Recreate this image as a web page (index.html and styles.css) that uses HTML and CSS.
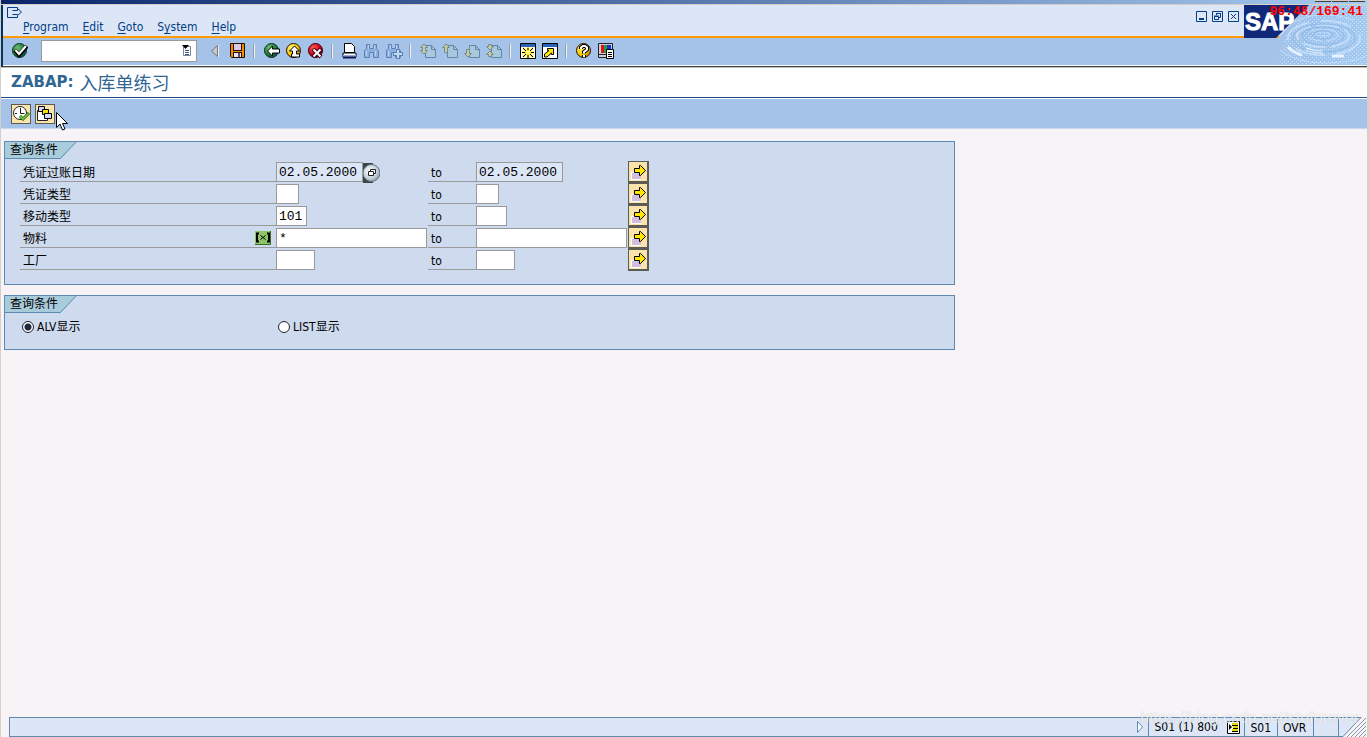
FILE: index.html
```html
<!DOCTYPE html>
<html lang="zh-CN">
<head>
<meta charset="utf-8">
<title>入库单练习</title>
<link rel="stylesheet" href="styles.css">
</head>
<body>
<svg class="defs" width="0" height="0" aria-hidden="true">
  <defs>
    <radialGradient id="green" cx=".35" cy=".3" r=".8"><stop offset="0" stop-color="#6cc070"/><stop offset=".6" stop-color="#1c7a34"/><stop offset="1" stop-color="#0c4a4c"/></radialGradient>
    <radialGradient id="yellow" cx=".35" cy=".3" r=".8"><stop offset="0" stop-color="#fff27a"/><stop offset=".6" stop-color="#f8c800"/><stop offset="1" stop-color="#c07800"/></radialGradient>
    <radialGradient id="red" cx=".35" cy=".3" r=".8"><stop offset="0" stop-color="#ff5a50"/><stop offset=".6" stop-color="#d80018"/><stop offset="1" stop-color="#800020"/></radialGradient>
    <radialGradient id="silver" cx=".4" cy=".4" r=".7"><stop offset="0" stop-color="#ffffff"/><stop offset=".6" stop-color="#c4d0dc"/><stop offset="1" stop-color="#808890"/></radialGradient>
    <linearGradient id="water" x1="0" y1="0" x2="1" y2="0"><stop offset="0" stop-color="#a6c4e8"/><stop offset=".4" stop-color="#9cc4ee"/><stop offset="1" stop-color="#a4caf0"/></linearGradient>
    <pattern id="grain" width="4" height="4" patternUnits="userSpaceOnUse"><path d="M0 0h1v1h-1zM2 2h1v1h-1z" fill="#cfe2fa"/></pattern>
    <symbol id="page" viewBox="0 0 16 16"><path d="M5.500 2.500h6l4 4v8h-10zM11.500 2.500v4h4" fill="#a9c8dc" stroke="#5f86a4"/></symbol>
    <symbol id="glasses" viewBox="0 0 16 16"><path d="M2.500 1.500h3v4h4v-4h3v4l2 2v7h-5v-5h-4v5h-5v-7l2-2z" fill="#8eb0de" stroke="#5c82b4"/><path d="M4.500 2v4M10.500 2v4M2.500 8v5M11.500 8v5" stroke="#bad2f0"/></symbol>
    <symbol id="more" viewBox="0 0 18 18"><path d="M2 9h10v8H2z" fill="#fff"/><path d="M3 10h9v6H3z" fill="#d2bce0"/><path d="M5.500 5.500h5v-3l1 0 5 5-5 5h-1v-3h-5z" fill="#ffe600" stroke="#000"/></symbol>
  </defs>
</svg>
<div class="window">
  <div class="caption"><i></i><i></i><i></i></div>
  <header class="head">
    <div class="menu-area">
      <div class="menus">
        <svg class="sys-icon" width="16" height="12" viewBox="0 0 16 12"><path d="M10.500 2V.5H.5v10h10V9M5.500 3.500h5V1.500l4 3.500-4 3.500V7.500h-5" fill="none" stroke="#003f87"/></svg>
        <nav class="menu"><button><u>P</u>rogram</button><button><u>E</u>dit</button><button><u>G</u>oto</button><button>S<u>y</u>stem</button><button><u>H</u>elp</button></nav>
      </div>
      <div class="win-buttons">
        <button aria-label="Minimize"><svg width="11" height="11"><path d="M.5.5h10v10H.5z" fill="none" stroke="#003f87"/><path d="M3 7h5v2H3z" fill="#003f87"/></svg></button>
        <button aria-label="Restore"><svg width="11" height="11"><path d="M.5.5h10v10H.5zM4.500 4V2.500h4v4H7M2.500 5.500h4v3h-4zM4 2.500h5M2 5h5" fill="none" stroke="#003f87"/></svg></button>
        <button aria-label="Close"><svg width="11" height="11"><path d="M.5.5h10v10H.5zM3 3l5 5M8 3L3 8" fill="none" stroke="#003f87"/></svg></button>
      </div>
    </div>
    <div class="toolbar">
      <button aria-label="Enter"><svg width="16" height="16"><circle cx="7.500" cy="7.500" r="7" fill="url(#green)" stroke="#0b2c28"/><path d="M3 7l4 5 8-9" fill="none" stroke="#000" stroke-width="4"/><path d="M3.500 7l3.500 4 7-8" fill="none" stroke="#fff" stroke-width="2"/></svg></button>
      <div class="command"><input type="text" aria-label="Command"><button aria-label="History"><svg width="10" height="12"><path d="M1.500 1.500h7v9h-7z" fill="#fff" stroke="#7488a4"/><path d="M3 5.500h4M3 7.500h4M3 9.500h4" stroke="#405878"/><path d="M0 0h7L3.500 4z" fill="#000"/></svg></button></div>
      <button aria-label="Collapse"><svg width="16" height="16"><path d="M9.500 2.500v11l-6-5.500z" fill="#c5c9ce" stroke="#737980"/><path d="M10.500 2v12" stroke="#eee"/></svg></button>
      <button aria-label="Save"><svg width="16" height="16"><path d="M.5.5h14v14h-13l-1-1z" fill="#f58a00" stroke="#201000"/><path d="M3 0h9v8H3z" fill="#201000"/><path d="M4 1h7v6H4z" fill="#dccae8"/><path d="M3 9h9v6H3z" fill="#201000"/><path d="M4 10h7v4H4z" fill="#e8e4ee"/><path d="M8 10h2v4H8z" fill="#604870"/></svg></button>
      <i class="sep"></i>
      <button aria-label="Back"><svg width="16" height="16"><circle cx="7.500" cy="7.500" r="7" fill="url(#green)" stroke="#0b2c28"/><path d="M3.500 8l5-5v3h7v4h-7v3z" fill="#fff" stroke="#000"/></svg></button>
      <button aria-label="Exit"><svg width="16" height="16"><circle cx="7.500" cy="7.500" r="7" fill="url(#yellow)" stroke="#241000"/><path d="M8.500 3l5 5h-3v3h3v3h-8v-3h1v-3h-3z" fill="#fff" stroke="#000"/></svg></button>
      <button aria-label="Cancel"><svg width="16" height="16"><circle cx="7.500" cy="7.500" r="7" fill="url(#red)" stroke="#300010"/><path d="M5 6l8 8M13 6l-8 8" stroke="#400010" stroke-width="4"/><path d="M5.500 6.500l7 7M12.500 6.500l-7 7" stroke="#fff" stroke-width="2"/></svg></button>
      <i class="sep"></i>
      <button aria-label="Print"><svg width="16" height="16"><path d="M1 10h13v4H1z" fill="#fff" stroke="#000"/><path d="M2.500.5h7l3 3v6h-10z" fill="#fff" stroke="#000"/><path d="M1 12h13v2H1z" fill="#98a8e0"/><path d="M1 14.500h13" stroke="#101850" stroke-width="2"/></svg></button>
      <button aria-label="Find"><svg width="16" height="16"><use href="#glasses"/></svg></button>
      <button aria-label="Find next"><svg width="18" height="16"><use href="#glasses" width="16" height="16"/><path d="M12 6v10M7 11h10" stroke="#5c82b4" stroke-width="4"/><path d="M12 7v8M8 11h8" stroke="#c4daf4" stroke-width="2"/></svg></button>
      <i class="sep"></i>
      <button aria-label="First page"><svg width="16" height="16"><use href="#page"/><path d="M.5 4.500L4 1l3.500 3.500h-2v3h2L4 11 .5 7.500h2v-3z" fill="#ccca9c" stroke="#718c98"/></svg></button>
      <button aria-label="Previous page"><svg width="16" height="16"><use href="#page"/><path d="M.5 4.500L4 1l3.500 3.500h-2v5h-3v-5z" fill="#ccca9c" stroke="#718c98"/></svg></button>
      <button aria-label="Next page"><svg width="16" height="16"><use href="#page"/><path d="M.5 10.500h2v-4h3v4h2L4 14z" fill="#ccca9c" stroke="#718c98"/></svg></button>
      <button aria-label="Last page"><svg width="16" height="16"><use href="#page"/><path d="M.5 3.500h2v-2h3v2h2L4 7zM.5 11.500L4 8l3.500 3.500h-2v2h-3v-2z" fill="#ccca9c" stroke="#718c98"/></svg></button>
      <i class="sep"></i>
      <button aria-label="New session"><svg width="16" height="16"><path d="M.5.5h15v15H.5z" fill="#fff" stroke="#000"/><path d="M1 1h14v3H1z" fill="#2864b8"/><path d="M3 5l10 9M13 5L3 14M8 4v11M2 9.500h12" stroke="#ffe800" stroke-width="2"/><path d="M3 5l3 3M13 5l-3 3M3 14l3-3M13 14l-3-3M8 5v2M8 12v3M2 9.500h3M11 9.500h3" stroke="#000"/><path d="M6 8h4v3H6z" fill="#fff799"/></svg></button>
      <button aria-label="Shortcut"><svg width="16" height="16"><path d="M.5.5h15v15H.5z" fill="#fff" stroke="#000"/><path d="M1 1h14v3H1z" fill="#2864b8"/><path d="M2.500 14V11L7 7.500H5.500V5.500h6v6H9.500V10L5 14z" fill="#ffe600" stroke="#000"/></svg></button>
      <i class="sep"></i>
      <button aria-label="Help"><svg width="16" height="16"><circle cx="7.500" cy="7.500" r="7" fill="url(#yellow)" stroke="#241000"/><path d="M5 6V4.500L7 3h2l2 1.500v2L8 9v1.500M8 12v2" fill="none" stroke="#000" stroke-width="4"/><path d="M5 6V4.500L7 3h2l2 1.500v2L8 9v1.500M8 12v2" fill="none" stroke="#fff" stroke-width="2"/></svg></button>
      <button aria-label="Customize layout"><svg width="16" height="16"><path d="M.5.5h14v11H.5zM.5 11.500h10v3H.5z" fill="#ccd" stroke="#222"/><path d="M3 2h3v8H3z" fill="#e01020"/><path d="M6 2h3v8H6z" fill="#20a030"/><path d="M9 2h4v8H9z" fill="#2030d0"/><path d="M8.500 6.500h7v9h-7z" fill="#fff" stroke="#000"/><path d="M10 9.500h4M10 11.500h4M10 13.500h4" stroke="#000"/></svg></button>
    </div>
    <svg class="brand" width="123" height="60" viewBox="0 0 123 60" role="img" aria-label="SAP">
      <path d="M0 33h123v27H0z" fill="#a5c2e8"/>
      <path d="M65 0h58v60H30l4-27z" fill="url(#water)"/>
      <path d="M65 0h58v60H36l4-26z" fill="url(#grain)"/>
      <g fill="none" stroke="#c3dcf8"><ellipse cx="79" cy="29" rx="7" ry="2"/><ellipse cx="79" cy="30" rx="15" ry="6" stroke-dasharray="14 4"/><ellipse cx="79" cy="31" rx="26" ry="11" stroke-width="2" stroke-dasharray="22 6"/><ellipse cx="80" cy="33" rx="36" ry="17" stroke-width="2" stroke-dasharray="30 12"/><path d="M36 45q22 18 70 11q12-2 17-6M50 17q25-14 60-2"/></g>
      <path d="M44 42q6 6 14 8M62 44q8 3 17 3M88 51h12" fill="none" stroke="#e6f2ff" stroke-width="3"/>
      <g fill="none" stroke="#8eb8e6"><ellipse cx="79" cy="30" rx="10" ry="4"/><ellipse cx="79" cy="31" rx="21" ry="9"/><ellipse cx="80" cy="33" rx="31" ry="14"/></g>
      <path d="M0 0h65L32 33H0z" fill="#10287a"/>
      <text class="logo-text" x="1" y="25">SAP</text>
    </svg>
  </header>
  <h1 class="title">ZABAP: <span>入库单练习</span></h1>
  <div class="actions">
    <button aria-label="Execute"><svg width="18" height="18"><circle cx="8" cy="8" r="6.500" fill="#fff" stroke="#222"/><path d="M8.500 3v5.500h4M3 8.500h2M8.500 12v1" fill="none" stroke="#222"/><path d="M8 11l3 3 6-6" fill="none" stroke="#123c12" stroke-width="3"/><path d="M8 11l3 3 6-6" fill="none" stroke="#64c030" stroke-width="2"/></svg></button>
    <button aria-label="Get variant"><svg width="18" height="18"><path d="M1.500 5.500h10v10h-10z" fill="#fff" stroke="#222"/><path d="M2.500 1.500h6v5h-6z" fill="#d4d8f4" stroke="#000"/><path d="M6.500 4.500h6v5h-6z" fill="#ffe000" stroke="#000"/><path d="M8.500 8.500h7v5h-7z" fill="#d4d8f4" stroke="#000"/></svg></button>
  </div>
  <main class="content">
    <section class="group">
      <h2><svg class="tab" width="72" height="17"><path d="M0 0h71L55.500 16.500H0z" fill="#a9ccdc"/><path d="M71 0L55.500 16.500H0" fill="none" stroke="#5c8ab0"/></svg><span>查询条件</span></h2>
      <div class="row"><label class="name" for="d1">凭证过账日期</label><div class="cell"><input id="d1" class="w10 date" value="02.05.2000"><button class="f4" aria-label="Choose date"><svg width="17" height="20"><path d="M0 0h10v20H0z" fill="#3c444c"/><circle cx="8.500" cy="10" r="8.500" fill="url(#silver)" stroke="#68747c"/><path d="M7.500 8V6.500h5v4H11M5.500 8.500h5v4h-5z" fill="#fff" stroke="#222"/></svg></button></div><label class="to" for="d2">to</label><div class="cell"><input id="d2" class="w10 date" value="02.05.2000"></div><button class="multi" aria-label="Multiple selection"><svg width="18" height="18"><use href="#more"/></svg></button></div>
      <div class="row"><label class="name" for="t1">凭证类型</label><div class="cell"><input id="t1" class="w2"></div><label class="to" for="t2">to</label><div class="cell"><input id="t2" class="w2"></div><button class="multi" aria-label="Multiple selection"><svg width="18" height="18"><use href="#more"/></svg></button></div>
      <div class="row"><label class="name" for="m1">移动类型</label><div class="cell"><input id="m1" class="w3" value="101"></div><label class="to" for="m2">to</label><div class="cell"><input id="m2" class="w3"></div><button class="multi" aria-label="Multiple selection"><svg width="18" height="18"><use href="#more"/></svg></button></div>
      <div class="row"><label class="name" for="p1">物料<svg class="pattern" width="16" height="14"><path d="M0 0h16v14H0z" fill="#8cc468"/><path d="M0 13.500h15.500V0" fill="none" stroke="#3f6c2c"/><path d="M4 2.500H2v8h2M12 2.500h2v8h-2" fill="none" stroke="#000" stroke-width="2"/><path d="M5.500 4.500l5 4M10.500 4.500l-5 4" stroke="#000"/></svg></label><div class="cell"><input id="p1" class="w18" value="*"></div><label class="to" for="p2">to</label><div class="cell"><input id="p2" class="w18"></div><button class="multi" aria-label="Multiple selection"><svg width="18" height="18"><use href="#more"/></svg></button></div>
      <div class="row"><label class="name" for="w1">工厂</label><div class="cell"><input id="w1" class="w4"></div><label class="to" for="w2">to</label><div class="cell"><input id="w2" class="w4"></div><button class="multi" aria-label="Multiple selection"><svg width="18" height="18"><use href="#more"/></svg></button></div>
    </section>
    <section class="group">
      <h2><svg class="tab" width="72" height="17"><path d="M0 0h71L55.500 16.500H0z" fill="#a9ccdc"/><path d="M71 0L55.500 16.500H0" fill="none" stroke="#5c8ab0"/></svg><span>查询条件</span></h2>
      <div class="radios"><label><input type="radio" name="view" checked>ALV显示</label><label><input type="radio" name="view">LIST显示</label></div>
    </section>
  </main>
  <footer class="status">
    <div class="message"><svg width="8" height="12"><path d="M1.500.5v11l5-5.500z" fill="#fff" stroke="#5c8ab0"/></svg></div>
    <div class="info">S01 (1) 800<button aria-label="System data"><svg width="13" height="13"><path d="M.5.5h12v12H.5z" fill="#fff" stroke="#000"/><path d="M2 3l3 3-3 3z" fill="#000"/><path d="M5 3h6M6 6h5M5 9h6" stroke="#e8d800" stroke-width="2"/><path d="M5 4.500h6M6 7.500h5M5 10.500h6" stroke="#000"/></svg></button></div>
    <div>S01</div>
    <div class="mode">OVR</div>
    <div class="blank"></div>
    <svg class="grip" width="28" height="20"><path d="M0 0h22L4 20H0z" fill="#dde6f6"/><path d="M0 .5h22M0 19.500h4L22 .5" fill="none" stroke="#5c8ab0"/><path d="M8 20L27 1M12 20L27 5M16 20L27 9M20 20l7-7M24 20l3-3" stroke="#8296b0"/></svg>
  </footer>
  <div class="timer">96:48/169:41</div>
  <div class="mark">https://blog.csdn.net/stuforever</div>
  <svg class="pointer" width="12" height="20"><path d="M.5.5v15l3.500-3.500 2.500 6 2.500-1-2.500-5.500h5z" fill="#fff" stroke="#000"/></svg>
</div>
</body>
</html>
```
FILE: styles.css
```css
* { box-sizing: border-box; }
body {
  margin: 0;
  font: 12px/16px "DejaVu Sans Condensed", "Noto Sans CJK SC", sans-serif;
  color: #000;
}
button { margin: 0; padding: 0; border: 0; background: none; font: inherit; color: inherit; }
svg { display: block; flex: none; }
.defs { position: absolute; }
.window {
  position: relative;
  display: flex;
  flex-direction: column;
  min-height: 100vh;
  background: #f7f3f7;
  border-left: 1px solid #d4d0c8;
  border-right: 2px solid #d4d0c8;
}
.caption {
  display: flex;
  justify-content: flex-end;
  gap: 1px;
  height: 5px;
  padding-right: 2px;
  background: linear-gradient(90deg, #0a246a, #a6caf0);
  border-bottom: 1px solid #d4d0c8;
}
.caption i { width: 16px; height: 2px; background: #d4d0c8; border-bottom: 1px solid #404040; }
.head {
  position: relative;
  border-left: 2px solid #003366;
  border-bottom: 1px solid #404040;
  box-shadow: 0 1px #c0c0c0;
}
.menu-area {
  display: flex;
  justify-content: space-between;
  height: 33px;
  padding: 2px 128px 0 4px;
  background: #dde6f6;
  border-bottom: 2px solid #ff9a00;
}
.menu { display: flex; gap: 14px; padding-left: 16px; color: #003f87; }
.menu u { text-underline-offset: 2px; }
.win-buttons { display: flex; gap: 5px; padding-top: 4px; align-items: flex-start; }
.toolbar {
  display: flex;
  align-items: center;
  gap: 6px;
  height: 28px;
  padding: 0 0 1px 9px;
  background: #a5c2e8;
  border-bottom: 1px solid #fff;
}
.toolbar > button { width: 16px; }
.sep { width: 6px; height: 14px; border-right: 3px solid #a5c2e8; box-shadow: inset -1px 0 #f4f0e8, inset -2px 0 #8c9cb4; }
.command {
  display: flex;
  align-items: center;
  width: 156px;
  height: 22px;
  margin: 0 5px 0 7px;
  padding-right: 4px;
  background: #fff;
  border: 1px solid #9a9a9a;
}
.command input { flex: 1; min-width: 0; border: 0; background: none; outline: 0; }
.brand { position: absolute; top: 0; right: 0; }
.logo-text { font: bold 24px "Liberation Sans", sans-serif; fill: #fff; stroke: #fff; }
.title {
  display: flex;
  align-items: center;
  gap: 6px;
  height: 31px;
  margin: 0;
  padding-left: 10px;
  background: #fff;
  border-bottom: 1px solid #1c4a7c;
  font: bold 15px/20px "DejaVu Sans", sans-serif;
  color: #316594;
}
.title span { font: 18px/20px "Noto Sans CJK SC", sans-serif; }
.actions {
  display: flex;
  align-items: center;
  gap: 4px;
  height: 31px;
  padding-left: 10px;
  background: #a5c2e8;
  border-top: 1px solid #fff;
  border-bottom: 1px solid #c8d8f0;
}
.actions button { padding: 0; background: #fae4ac; border: 1px solid #5c5c54; }
.content {
  display: flex;
  flex: 1;
  flex-direction: column;
  gap: 10px;
  max-width: 954px;
  padding: 12px 0 0 3px;
}
.group { background: #cedaed; border: 1px solid #5c8ab0; padding-bottom: 13px; }
.group h2 { display: grid; height: 19px; margin: 0; font: inherit; }
.group h2 > * { grid-area: 1 / 1; }
.group h2 span { padding-left: 5px; }
.row { display: grid; grid-template-columns: 256px 152px 48px 152px 21px; height: 22px; padding-left: 15px; }
.name, .to { display: flex; height: 21px; padding: 4px 0 0 3px; border-bottom: 1px solid #9a9a9a; }
.name { justify-content: space-between; }
.pattern { margin-right: 5px; }
.cell { display: flex; padding-top: 1px; }
.cell input {
  height: 20px;
  padding: 0 2px;
  border: 1px solid #9a9a9a;
  border-radius: 0;
  background: #fff;
  font: 13px "Liberation Mono", monospace;
  outline: 0;
}
.cell .date { background: #dde6f6; }
.w2 { width: 23px; }
.w3 { width: 31px; }
.w4 { width: 39px; }
.w10 { width: 87px; }
.w18 { width: 151px; }
.multi { width: 21px; height: 22px; background: #fae4ac; border: 1px solid #5c5c54; border-width: 1px 2px 2px 1px; }
.radios { display: grid; grid-template-columns: 256px 256px; padding: 4px 0 1px 17px; }
.radios label { display: flex; align-items: center; gap: 3px; }
.radios input {
  appearance: none;
  width: 12px;
  height: 12px;
  margin: 0;
  border: 1px solid #202030;
  border-radius: 50%;
  background: #fff;
}
.radios input:checked { background: radial-gradient(circle, #202840 0 3px, #fff 4px); }
.status { display: flex; height: 20px; padding-left: 8px; line-height: 20px; }
.status > div { padding: 0 6px 0 5px; background: #dde6f6; border: 1px solid #5c8ab0; border-left-width: 0; }
.status .message { display: flex; flex: 1; align-items: center; justify-content: flex-end; padding: 0 4px 0 0; border-left-width: 1px; }
.status .info { display: flex; align-items: center; justify-content: space-between; width: 96px; padding-right: 4px; }
.status .mode { width: 36px; }
.status .blank { width: 25px; }
.timer {
  position: absolute;
  top: 4px;
  right: 4px;
  font: bold 13px/16px "Liberation Mono", monospace;
  color: #f00;
}
.mark {
  position: absolute;
  right: 8px;
  bottom: 9px;
  font: 16px/20px "Liberation Sans", sans-serif;
  color: rgba(255, 255, 255, .75);
  text-shadow: 0 0 1px rgba(90, 90, 110, .3);
}
.pointer { position: absolute; left: 55px; top: 112px; }
```
